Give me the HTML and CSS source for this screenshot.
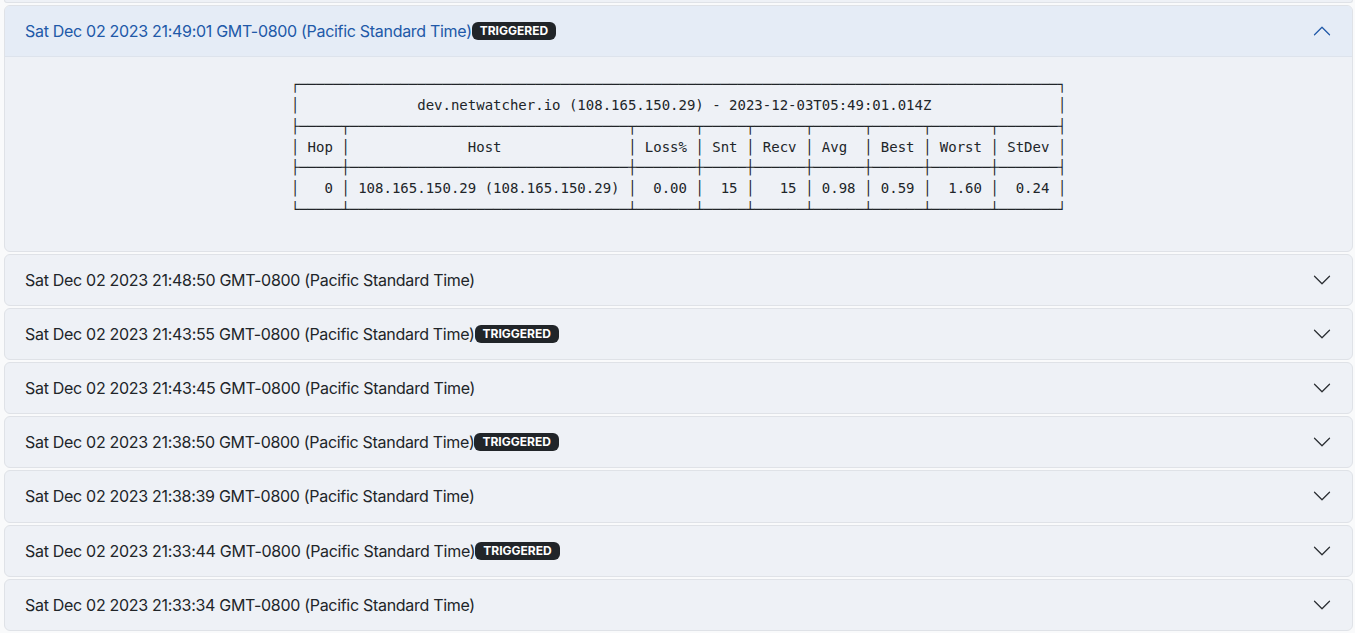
FILE: index.html
```html
<!DOCTYPE html>
<html lang="en">
<head>
<meta charset="utf-8">
<title>Traceroute history</title>
<link rel="stylesheet" href="styles.css">
</head>
<body>
<div class="accordion">
  <div class="item item-prev"></div>

  <div class="item open">
    <div class="item-header">
      <span class="stamp">Sat Dec 02 2023 21:49:01 GMT-0800 (Pacific Standard Time)</span><span class="badge">TRIGGERED</span>
      <svg class="chev" viewBox="0 0 16 16" fill="none" stroke-linecap="round" stroke-linejoin="round"><path d="M2 5L8 11L14 5"/></svg>
    </div>
    <div class="item-body">
<pre class="mtr">┌──────────────────────────────────────────────────────────────────────────────────────────┐
│              dev.netwatcher.io (108.165.150.29) - 2023-12-03T05:49:01.014Z               │
├─────┬─────────────────────────────────┬───────┬─────┬──────┬──────┬──────┬───────┬───────┤
│ Hop │              Host               │ Loss% │ Snt │ Recv │ Avg  │ Best │ Worst │ StDev │
├─────┼─────────────────────────────────┼───────┼─────┼──────┼──────┼──────┼───────┼───────┤
│   0 │ 108.165.150.29 (108.165.150.29) │  0.00 │  15 │   15 │ 0.98 │ 0.59 │  1.60 │  0.24 │
└─────┴─────────────────────────────────┴───────┴─────┴──────┴──────┴──────┴───────┴───────┘</pre>
    </div>
  </div>

  <div class="item">
    <div class="item-header">
      <span class="stamp">Sat Dec 02 2023 21:48:50 GMT-0800 (Pacific Standard Time)</span>
      <svg class="chev" viewBox="0 0 16 16" fill="none" stroke-linecap="round" stroke-linejoin="round"><path d="M2 5L8 11L14 5"/></svg>
    </div>
  </div>

  <div class="item">
    <div class="item-header">
      <span class="stamp">Sat Dec 02 2023 21:43:55 GMT-0800 (Pacific Standard Time)</span><span class="badge">TRIGGERED</span>
      <svg class="chev" viewBox="0 0 16 16" fill="none" stroke-linecap="round" stroke-linejoin="round"><path d="M2 5L8 11L14 5"/></svg>
    </div>
  </div>

  <div class="item">
    <div class="item-header">
      <span class="stamp">Sat Dec 02 2023 21:43:45 GMT-0800 (Pacific Standard Time)</span>
      <svg class="chev" viewBox="0 0 16 16" fill="none" stroke-linecap="round" stroke-linejoin="round"><path d="M2 5L8 11L14 5"/></svg>
    </div>
  </div>

  <div class="item">
    <div class="item-header">
      <span class="stamp">Sat Dec 02 2023 21:38:50 GMT-0800 (Pacific Standard Time)</span><span class="badge">TRIGGERED</span>
      <svg class="chev" viewBox="0 0 16 16" fill="none" stroke-linecap="round" stroke-linejoin="round"><path d="M2 5L8 11L14 5"/></svg>
    </div>
  </div>

  <div class="item">
    <div class="item-header">
      <span class="stamp">Sat Dec 02 2023 21:38:39 GMT-0800 (Pacific Standard Time)</span>
      <svg class="chev" viewBox="0 0 16 16" fill="none" stroke-linecap="round" stroke-linejoin="round"><path d="M2 5L8 11L14 5"/></svg>
    </div>
  </div>

  <div class="item">
    <div class="item-header">
      <span class="stamp">Sat Dec 02 2023 21:33:44 GMT-0800 (Pacific Standard Time)</span><span class="badge">TRIGGERED</span>
      <svg class="chev" viewBox="0 0 16 16" fill="none" stroke-linecap="round" stroke-linejoin="round"><path d="M2 5L8 11L14 5"/></svg>
    </div>
  </div>

  <div class="item">
    <div class="item-header">
      <span class="stamp">Sat Dec 02 2023 21:33:34 GMT-0800 (Pacific Standard Time)</span>
      <svg class="chev" viewBox="0 0 16 16" fill="none" stroke-linecap="round" stroke-linejoin="round"><path d="M2 5L8 11L14 5"/></svg>
    </div>
  </div>
</div>
</body>
</html>
```

FILE: styles.css
```css
html, body {
  margin: 0;
  padding: 0;
  background: #f9fafb;
}

body {
  font-family: Inter, "Liberation Sans", Arial, sans-serif;
  font-size: 16px;
  color: #212529;
  overflow: hidden;
}

.accordion {
  display: flex;
  flex-direction: column;
  gap: 2px;
  padding: 0 2px 0 4px;
}

.item {
  background: #eef1f6;
  border: 1px solid #dfe2e7;
  border-radius: 6px;
  overflow: hidden;
}

.item-prev {
  height: 2px;
  border-top: none;
  border-radius: 0 0 6px 6px;
}

.item-header {
  display: flex;
  align-items: center;
  padding: 13.08px 20px;
  line-height: 24px;
}

.stamp {
  letter-spacing: -0.3px;
  white-space: nowrap;
}

.badge {
  display: inline-block;
  background: #212529;
  color: #fff;
  font-family: Inter, "Liberation Sans", Arial, sans-serif;
  font-size: 12px;
  font-weight: 700;
  line-height: 1;
  padding: 3px 8px;
  border-radius: 6px;
  letter-spacing: 0;
}

.chev {
  width: 20px;
  height: 20px;
  margin-left: auto;
  stroke: #2b2f33;
  stroke-width: 1;
  flex-shrink: 0;
}

.open .item-header {
  background: #e5ecf6;
  color: #2159a8;
  border-bottom: 1px solid #dde3ec;
}

.open .chev {
  stroke: #2159a8;
  transform: rotate(180deg);
}

.item-body {
  display: flex;
  justify-content: center;
  padding: 17px 20px 15px;
}

.mtr {
  margin: 0 0 16px;
  font-family: "DejaVu Sans Mono", "Liberation Mono", monospace;
  font-size: 14px;
  line-height: 20.8px;
  color: #212529;
}
```
